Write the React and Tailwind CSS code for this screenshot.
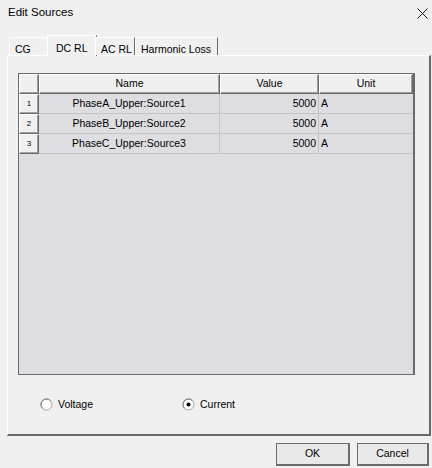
import React from 'react';

const ROWS = [
  { id: 1, name: 'PhaseA_Upper:Source1', value: 5000, unit: 'A' },
  { id: 2, name: 'PhaseB_Upper:Source2', value: 5000, unit: 'A' },
  { id: 3, name: 'PhaseC_Upper:Source3', value: 5000, unit: 'A' },
];

const TABS = [
  { label: 'CG', w: 'w-[40px]' },
  { label: 'DC RL', w: 'w-[50px]', active: true },
  { label: 'AC RL', w: 'w-[40px]' },
  { label: 'Harmonic Loss', w: 'w-[83px]' },
];

function Radio({ checked, label }) {
  return (
    <div className="flex items-center gap-[5px]">
      <svg width="13" height="13" viewBox="0 0 13 13">
        <circle cx="6.5" cy="6.5" r="5.5" fill="#ffffff" stroke="#a0a0a0" />
        <path d="M2.6 10.4 A5.5 5.5 0 0 1 10.4 2.6" fill="none" stroke="#7a7a7a" />
        {checked && <circle cx="6.5" cy="6.5" r="2" fill="#000000" />}
      </svg>
      <span>{label}</span>
    </div>
  );
}

function HeadCell({ className, children }) {
  return (
    <div className={`h-full flex items-center justify-center bg-[#f0f0f0] border-t border-l border-white border-r border-b border-r-[#696969] border-b-[#696969] shadow-[inset_-1px_-1px_0_#a0a0a0] ${className}`}>
      {children}
    </div>
  );
}

export default function App() {
  return (
    <div className="w-[432px] h-[468px] bg-[#f0f0f0] flex flex-col text-black font-['Liberation_Sans',Arial,sans-serif] text-[10.5px] overflow-hidden">
      {/* title bar */}
      <div className="h-[26px] flex items-center justify-between pl-[8px] pr-[4px]">
        <span className="text-[11.5px]">Edit Sources</span>
        <svg width="11" height="11" viewBox="0 0 11 11">
          <path d="M0.5 0.5 L10.5 10.5 M10.5 0.5 L0.5 10.5" stroke="#1a1a1a" strokeWidth="1" />
        </svg>
      </div>

      {/* tabs */}
      <div className="mt-[10px] h-[19px] flex items-end pl-[9px] relative z-10">
        {TABS.map(t =>
          t.active ? (
            <div key={t.label} className={`${t.w} h-[21px] -mb-[1px] -mx-[2px] bg-[#f0f0f0] border-t border-l border-white border-r border-r-[#696969] pl-[8px] pt-[5px]`}>
              {t.label}
            </div>
          ) : (
            <div key={t.label} className={`${t.w} h-[18px] bg-[#f0f0f0] border-t border-l border-white border-r border-r-[#696969] pl-[5px] pt-[4px]`}>
              {t.label}
            </div>
          )
        )}
      </div>

      {/* panel */}
      <div className="mx-[7px] mr-[1px] h-[381px] border-t border-l border-white border-r-2 border-b-2 border-r-[#696969] border-b-[#696969] flex flex-col pt-[17px] pl-[10px] pr-[15px]">
        <div className="w-[397px] h-[302px] bg-[#dedde2] border-t border-l border-b border-[#696969] border-r-2 flex flex-col">
          <div className="h-[20px] flex">
            <HeadCell className="w-[20px]" />
            <HeadCell className="w-[181px]">Name</HeadCell>
            <HeadCell className="w-[99px]">Value</HeadCell>
            <HeadCell className="flex-1">Unit</HeadCell>
          </div>
          {ROWS.map(r => (
            <div key={r.id} className="h-[20px] flex">
              <HeadCell className="w-[20px] text-[8px]">{r.id}</HeadCell>
              <div className="w-[181px] flex items-center justify-center border-r border-b border-[#c4c4c8]">{r.name}</div>
              <div className="w-[99px] flex items-center justify-end pr-[2px] border-r border-b border-[#c4c4c8]">{r.value}</div>
              <div className="flex-1 flex items-center pl-[2px] border-b border-[#c4c4c8]">{r.unit}</div>
            </div>
          ))}
        </div>

        <div className="mt-[22px] flex items-center pl-[22px]">
          <div className="w-[142px]">
            <Radio label="Voltage" />
          </div>
          <Radio label="Current" checked />
        </div>
      </div>

      {/* footer */}
      <div className="flex justify-end gap-[7px] pt-[7px] pr-[3px]">
        <button className="w-[74px] h-[23px] bg-[#e9e9e9] border border-[#6d6d6d] border-b-2 border-r-2 flex items-center justify-center">
          OK
        </button>
        <button className="w-[72px] h-[23px] bg-[#e9e9e9] border border-[#6d6d6d] border-b-2 border-r-2 flex items-center justify-center">
          Cancel
        </button>
      </div>
    </div>
  );
}
